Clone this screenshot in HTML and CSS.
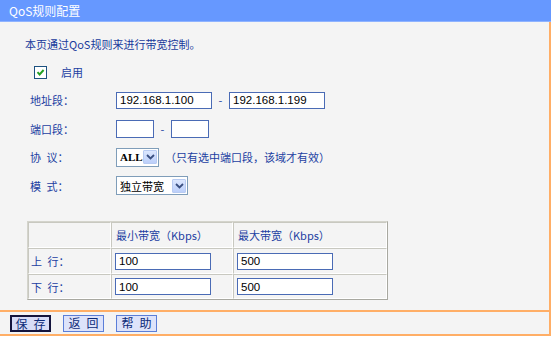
FILE: index.html
```html
<!DOCTYPE html>
<html lang="zh-CN">
<head>
<meta charset="utf-8">
<title>QoS规则配置</title>
<link rel="stylesheet" href="styles.css">
</head>
<body>
<div class="page">
  <div class="titlebar">QoS规则配置</div>
  <div class="main">
    <p class="desc">本页通过QoS规则来进行带宽控制。</p>
    <div class="enable">
      <span class="checkbox"><svg width="11" height="11" viewBox="0 0 11 11"><path d="M2.5 5.2 L4.6 7.5 L8.6 3" fill="none" stroke="#22a022" stroke-width="1.9"/></svg></span>
      <span class="enable-text">启用</span>
    </div>
    <div class="form">
      <div class="row">
        <span class="label">地址段：</span>
        <input class="ip" type="text" value="192.168.1.100">
        <span class="dash">-</span>
        <input class="ip" type="text" value="192.168.1.199">
      </div>
      <div class="row">
        <span class="label">端口段：</span>
        <input class="port" type="text" value="">
        <span class="dash">-</span>
        <input class="port" type="text" value="">
      </div>
      <div class="row">
        <span class="label">协&ensp;议：</span>
        <span class="select sel-proto"><span class="sel-text">ALL</span><span class="arrow"><svg width="9" height="6" viewBox="0 0 9 6"><path d="M1 1 L4.5 4.5 L8 1" fill="none" stroke="#3a4f80" stroke-width="1.8"/></svg></span></span>
        <span class="note">（只有选中端口段，该域才有效）</span>
      </div>
      <div class="row">
        <span class="label">模&ensp;式：</span>
        <span class="select sel-mode"><span class="sel-text">独立带宽</span><span class="arrow"><svg width="9" height="6" viewBox="0 0 9 6"><path d="M1 1 L4.5 4.5 L8 1" fill="none" stroke="#3a4f80" stroke-width="1.8"/></svg></span></span>
      </div>
    </div>
    <table class="bw">
      <colgroup><col class="c1"><col class="c2"><col class="c3"></colgroup>
      <tr class="head"><td></td><td>最小带宽（Kbps）</td><td>最大带宽（Kbps）</td></tr>
      <tr><td class="rl">上&ensp;行：</td><td><input class="bwin" type="text" value="100"></td><td><input class="bwin" type="text" value="500"></td></tr>
      <tr class="last"><td class="rl">下&ensp;行：</td><td><input class="bwin" type="text" value="100"></td><td><input class="bwin" type="text" value="500"></td></tr>
    </table>
  </div>
  <div class="buttons">
    <button class="btn focus" type="button">保&ensp;存</button>
    <button class="btn" type="button">返&ensp;回</button>
    <button class="btn" type="button">帮&ensp;助</button>
  </div>
</div>
</body>
</html>
```
FILE: styles.css
```css
html, body {
  margin: 0;
  padding: 0;
  background: #ffffff;
}
body {
  font-family: "Noto Sans CJK SC", "DejaVu Sans", sans-serif;
  font-size: 11px;
  color: #1c3fa2;
}
.page {
  width: 551px;
  display: flex;
  flex-direction: column;
}
.titlebar {
  height: 21px;
  line-height: 21px;
  background: #6698ff;
  border-bottom: 1px solid #8fb3ff;
  color: #ffffff;
  font-size: 12px;
  padding-left: 9px;
}
.main {
  height: 274px;
  padding-top: 14px;
  background: #f4f4f4;
  border-right: 2px solid #ffae66;
  border-bottom: 2px solid #ffae66;
}
.desc {
  margin: 0 0 0 25px;
  line-height: 16px;
  height: 16px;
  color: #183a9c;
}
.enable {
  height: 28px;
  margin-top: 6px;
  padding-left: 34px;
  display: flex;
  align-items: center;
}
.checkbox {
  width: 13px;
  height: 13px;
  box-sizing: border-box;
  border: 1px solid #1c5180;
  background: #ffffff;
  display: flex;
  align-items: center;
  justify-content: center;
}
.enable-text {
  margin-left: 14px;
}
.form {
  display: flex;
  flex-direction: column;
}
.row {
  height: 28.5px;
  padding-left: 30px;
  display: flex;
  align-items: center;
}
.label {
  width: 86px;
  flex: none;
}
input {
  box-sizing: border-box;
  margin: 0;
  padding: 0 3px;
  border: 1px solid #4a6bb5;
  background: #ffffff;
  font-family: "Liberation Sans", sans-serif;
  font-size: 11.5px;
  color: #000000;
  outline: none;
}
.ip {
  width: 96px;
  height: 17px;
}
.port {
  width: 38px;
  height: 18px;
}
.dash {
  width: 17px;
  text-align: center;
  flex: none;
}
.select {
  box-sizing: border-box;
  height: 19px;
  border: 1px solid #7f9db9;
  background: #ffffff;
  display: flex;
  align-items: center;
  justify-content: space-between;
  padding: 0 1px 0 3px;
  color: #000000;
}
.sel-proto {
  width: 43px;
  font-family: "Liberation Serif", serif;
  font-size: 11px;
  font-weight: bold;
}
.sel-mode {
  width: 72px;
  font-size: 11px;
}
.arrow {
  width: 14px;
  height: 14px;
  box-sizing: border-box;
  border: 1px solid #b8cbf2;
  border-radius: 1px;
  background: linear-gradient(#dce7fe, #bccffa);
  display: flex;
  align-items: center;
  justify-content: center;
}
.note {
  margin-left: 6px;
}
.bw {
  margin: 21px 0 0 27px;
  width: 361px;
  table-layout: fixed;
  border-collapse: separate;
  border-spacing: 0;
  border: 1px solid;
  border-color: #d4d4cc #a8a8a0 #a8a8a0 #d4d4cc;
}
.c1 { width: 83px; }
.c2 { width: 122px; }
.c3 { width: 154px; }
.bw td {
  box-sizing: border-box;
  height: 26px;
  padding: 0 0 0 3px;
  border: 1px solid;
  border-color: #c8c8c0 #ffffff #ffffff #c8c8c0;
  vertical-align: middle;
}
.bw .head td {
  padding-left: 4px;
}
.bw .last td {
  height: 25px;
}
.bw td.rl {
  padding-left: 2px;
}
.bwin {
  display: block;
  width: 96px;
  height: 17px;
}
.buttons {
  height: 22px;
  padding-left: 10px;
  background: #f4f4f4;
  border-right: 2px solid #ffae66;
  border-bottom: 2px solid #ffae66;
  display: flex;
  align-items: center;
  gap: 12px;
}
.btn {
  box-sizing: border-box;
  width: 41px;
  height: 17px;
  margin: 0;
  padding: 0;
  border: 1px solid #5b7ed8;
  background: #dde3fa;
  font-family: "Noto Sans CJK SC", sans-serif;
  font-size: 12px;
  line-height: 14px;
  color: #0c2a78;
}
.btn.focus {
  border: 2px solid #14143c;
  background: #d7dcf6;
}
```
